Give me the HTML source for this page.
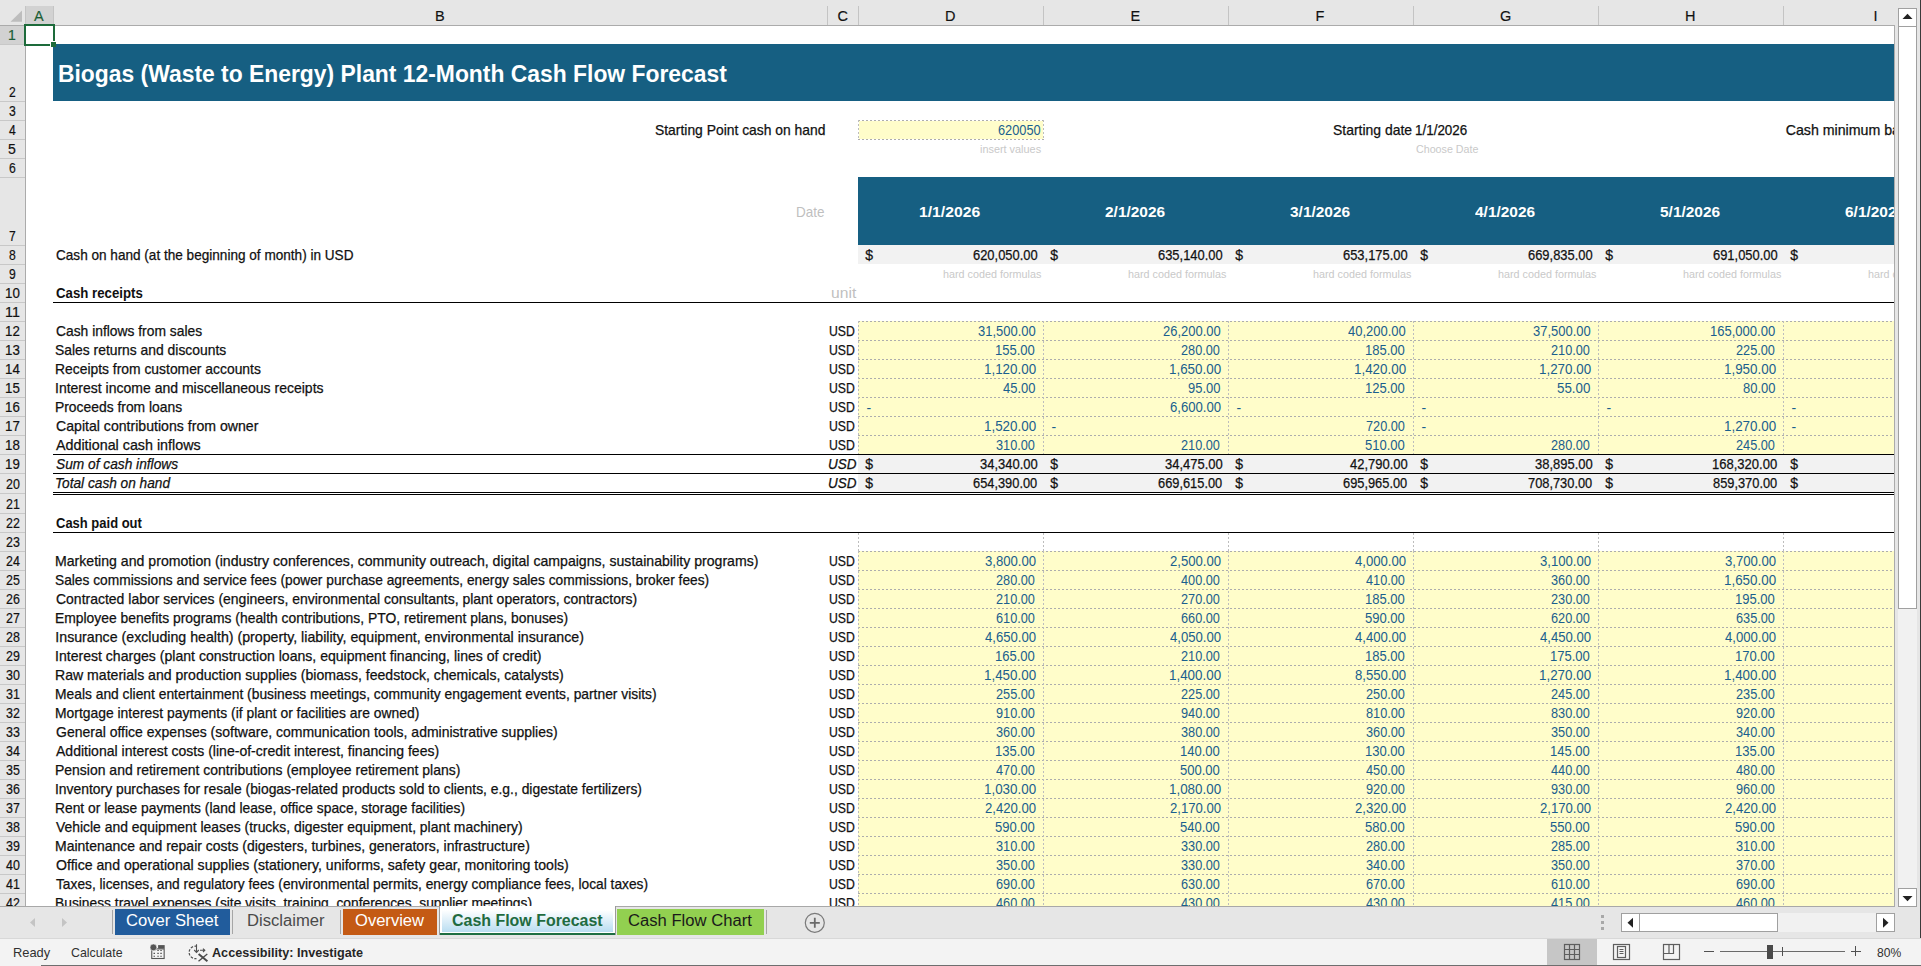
<!DOCTYPE html><html><head><meta charset="utf-8"><style>
*{margin:0;padding:0;box-sizing:content-box}
html,body{width:1921px;height:966px;overflow:hidden;background:#fff;font-family:"Liberation Sans", sans-serif}
.r{position:absolute}
.t{position:absolute;white-space:nowrap;font-family:"Liberation Sans", sans-serif}
#grid{position:absolute;left:26px;top:26px;width:1868px;height:880px;overflow:hidden}
#gin{position:absolute;left:-26px;top:-26px;width:1921px;height:966px}
#rh{position:absolute;left:0;top:26px;width:25px;height:880px;overflow:hidden}
#rhin{position:absolute;left:0;top:-26px;width:25px;height:966px}
.dh{position:absolute;height:1px;background:repeating-linear-gradient(90deg,#ADADAD 0 2px,transparent 2px 4px)}
.dv{position:absolute;width:1px;background:repeating-linear-gradient(180deg,#BDBDBD 0 2px,transparent 2px 4px)}
</style></head><body><div class="r" style="left:0px;top:0px;width:1921px;height:25px;background:#E6E6E6;"></div><div class="r" style="left:25px;top:6px;width:28px;height:19px;background:#D2D2D2;"></div><div class="r" style="left:25px;top:6px;width:1px;height:19px;background:#C4C4C4;"></div><div class="r" style="left:53px;top:6px;width:1px;height:19px;background:#C4C4C4;"></div><div class="r" style="left:827px;top:6px;width:1px;height:19px;background:#C4C4C4;"></div><div class="r" style="left:858px;top:6px;width:1px;height:19px;background:#C4C4C4;"></div><div class="r" style="left:1043px;top:6px;width:1px;height:19px;background:#C4C4C4;"></div><div class="r" style="left:1228px;top:6px;width:1px;height:19px;background:#C4C4C4;"></div><div class="r" style="left:1413px;top:6px;width:1px;height:19px;background:#C4C4C4;"></div><div class="r" style="left:1598px;top:6px;width:1px;height:19px;background:#C4C4C4;"></div><div class="r" style="left:1783px;top:6px;width:1px;height:19px;background:#C4C4C4;"></div><div class="r" style="left:0px;top:25px;width:1895px;height:1px;background:#ABABAB;"></div><svg class="r" style="left:0;top:0" width="25" height="25"><polygon points="10.5,21.7 22,10.4 22,21.7" fill="#BDBDBD"/></svg><div class="r" style="left:0px;top:26px;width:25px;height:880px;background:#E6E6E6;"></div><div class="r" style="left:0px;top:26px;width:25px;height:18px;background:#D2D2D2;"></div><div class="r" style="left:25px;top:25px;width:1px;height:881px;background:#ABABAB;"></div><div class="r" style="left:0px;top:44px;width:25px;height:1px;background:#C8C8C8;"></div><div class="r" style="left:0px;top:101px;width:25px;height:1px;background:#C8C8C8;"></div><div class="r" style="left:0px;top:120px;width:25px;height:1px;background:#C8C8C8;"></div><div class="r" style="left:0px;top:139px;width:25px;height:1px;background:#C8C8C8;"></div><div class="r" style="left:0px;top:158px;width:25px;height:1px;background:#C8C8C8;"></div><div class="r" style="left:0px;top:177px;width:25px;height:1px;background:#C8C8C8;"></div><div class="r" style="left:0px;top:245px;width:25px;height:1px;background:#C8C8C8;"></div><div class="r" style="left:0px;top:264px;width:25px;height:1px;background:#C8C8C8;"></div><div class="r" style="left:0px;top:283px;width:25px;height:1px;background:#C8C8C8;"></div><div class="r" style="left:0px;top:302px;width:25px;height:1px;background:#C8C8C8;"></div><div class="r" style="left:0px;top:321px;width:25px;height:1px;background:#C8C8C8;"></div><div class="r" style="left:0px;top:340px;width:25px;height:1px;background:#C8C8C8;"></div><div class="r" style="left:0px;top:359px;width:25px;height:1px;background:#C8C8C8;"></div><div class="r" style="left:0px;top:378px;width:25px;height:1px;background:#C8C8C8;"></div><div class="r" style="left:0px;top:397px;width:25px;height:1px;background:#C8C8C8;"></div><div class="r" style="left:0px;top:416px;width:25px;height:1px;background:#C8C8C8;"></div><div class="r" style="left:0px;top:435px;width:25px;height:1px;background:#C8C8C8;"></div><div class="r" style="left:0px;top:454px;width:25px;height:1px;background:#C8C8C8;"></div><div class="r" style="left:0px;top:473px;width:25px;height:1px;background:#C8C8C8;"></div><div class="r" style="left:0px;top:493px;width:25px;height:1px;background:#C8C8C8;"></div><div class="r" style="left:0px;top:513px;width:25px;height:1px;background:#C8C8C8;"></div><div class="r" style="left:0px;top:532px;width:25px;height:1px;background:#C8C8C8;"></div><div class="r" style="left:0px;top:551px;width:25px;height:1px;background:#C8C8C8;"></div><div class="r" style="left:0px;top:570px;width:25px;height:1px;background:#C8C8C8;"></div><div class="r" style="left:0px;top:589px;width:25px;height:1px;background:#C8C8C8;"></div><div class="r" style="left:0px;top:608px;width:25px;height:1px;background:#C8C8C8;"></div><div class="r" style="left:0px;top:627px;width:25px;height:1px;background:#C8C8C8;"></div><div class="r" style="left:0px;top:646px;width:25px;height:1px;background:#C8C8C8;"></div><div class="r" style="left:0px;top:665px;width:25px;height:1px;background:#C8C8C8;"></div><div class="r" style="left:0px;top:684px;width:25px;height:1px;background:#C8C8C8;"></div><div class="r" style="left:0px;top:703px;width:25px;height:1px;background:#C8C8C8;"></div><div class="r" style="left:0px;top:722px;width:25px;height:1px;background:#C8C8C8;"></div><div class="r" style="left:0px;top:741px;width:25px;height:1px;background:#C8C8C8;"></div><div class="r" style="left:0px;top:760px;width:25px;height:1px;background:#C8C8C8;"></div><div class="r" style="left:0px;top:779px;width:25px;height:1px;background:#C8C8C8;"></div><div class="r" style="left:0px;top:798px;width:25px;height:1px;background:#C8C8C8;"></div><div class="r" style="left:0px;top:817px;width:25px;height:1px;background:#C8C8C8;"></div><div class="r" style="left:0px;top:836px;width:25px;height:1px;background:#C8C8C8;"></div><div class="r" style="left:0px;top:855px;width:25px;height:1px;background:#C8C8C8;"></div><div class="r" style="left:0px;top:874px;width:25px;height:1px;background:#C8C8C8;"></div><div class="r" style="left:0px;top:893px;width:25px;height:1px;background:#C8C8C8;"></div><div class="r" style="left:1894px;top:25px;width:1px;height:881px;background:#ABABAB;"></div><div class="r" style="left:1895px;top:0px;width:26px;height:938px;background:#E6E6E6;"></div><div class="r" style="left:1898px;top:27px;width:19px;height:861px;background:#F1F1F1;"></div><div class="r" style="left:1898px;top:8px;width:17px;height:17px;background:#fff;border:1px solid #A0A0A0;"></div><svg class="r" style="left:1898px;top:8px" width="19" height="19"><polygon points="4.5,11 14.5,11 9.5,5.8" fill="#222"/></svg><div class="r" style="left:1898px;top:26px;width:17px;height:581px;background:#fff;border:1px solid #A0A0A0;"></div><div class="r" style="left:1898px;top:888px;width:17px;height:17px;background:#fff;border:1px solid #A0A0A0;"></div><svg class="r" style="left:1898px;top:888px" width="19" height="19"><polygon points="4.5,8 14.5,8 9.5,13.2" fill="#222"/></svg><div class="r" style="left:1920px;top:0px;width:1px;height:938px;background:#3a3a3a;"></div><div class="r" style="left:0px;top:906px;width:1895px;height:32px;background:#E6E6E6;"></div><div class="r" style="left:0px;top:906px;width:1895px;height:1px;background:#A8A8A8;"></div><svg class="r" style="left:0;top:906px" width="100" height="32"><polygon points="30,16.5 35,12 35,21" fill="#C4C4C4"/><polygon points="62,12 62,21 67,16.5" fill="#C4C4C4"/></svg><div class="r" style="left:112px;top:910px;width:1px;height:24px;background:#A6A6A6;"></div><div class="r" style="left:115px;top:909px;width:115px;height:26px;background:#215C9C;"></div><div class="r" style="left:232px;top:910px;width:1px;height:24px;background:#A6A6A6;"></div><div class="r" style="left:340px;top:910px;width:1px;height:24px;background:#A6A6A6;"></div><div class="r" style="left:343px;top:909px;width:94px;height:26px;background:#C45A14;"></div><div class="r" style="left:439px;top:906px;width:1px;height:29px;background:#9A9A9A;"></div><div class="r" style="left:615px;top:906px;width:1px;height:29px;background:#9A9A9A;"></div><div class="r" style="left:440px;top:906px;width:175px;height:27px;background:#FFFFFF;"></div><div class="r" style="left:442px;top:910px;width:171px;height:22px;background:linear-gradient(#FFFFFF,#B9DDF1);"></div><div class="r" style="left:440px;top:933px;width:175px;height:2px;background:#1E6E42;"></div><div class="r" style="left:617px;top:909px;width:147px;height:26px;background:#92D050;"></div><div class="r" style="left:766px;top:910px;width:1px;height:24px;background:#A6A6A6;"></div><svg class="r" style="left:800px;top:908px" width="30" height="30"><circle cx="14.8" cy="14.8" r="9.5" fill="none" stroke="#7A7A7A" stroke-width="1.2"/><path d="M14.8 9.8V19.8M9.8 14.8H19.8" stroke="#6A6A6A" stroke-width="1.8"/></svg><div class="r" style="left:1601px;top:915px;width:3px;height:3px;background:#A8A8A8"></div><div class="r" style="left:1601px;top:921px;width:3px;height:3px;background:#A8A8A8"></div><div class="r" style="left:1601px;top:927px;width:3px;height:3px;background:#A8A8A8"></div><div class="r" style="left:1621px;top:913px;width:274px;height:19px;background:#F1F1F1;"></div><div class="r" style="left:1621px;top:913px;width:17px;height:17px;background:#fff;border:1px solid #A0A0A0;"></div><svg class="r" style="left:1621px;top:913px" width="19" height="19"><polygon points="6.5,9.75 12,4.8 12,14.7" fill="#222"/></svg><div class="r" style="left:1639px;top:913px;width:137px;height:17px;background:#fff;border:1px solid #A0A0A0;"></div><div class="r" style="left:1876px;top:913px;width:17px;height:17px;background:#fff;border:1px solid #A0A0A0;"></div><svg class="r" style="left:1876px;top:913px" width="19" height="19"><polygon points="7,4.8 7,14.7 12.5,9.75" fill="#222"/></svg><div class="r" style="left:0px;top:938px;width:1921px;height:28px;background:#F3F3F3;"></div><div class="r" style="left:0px;top:938px;width:1921px;height:1px;background:#D8D8D8;"></div><div class="r" style="left:41px;top:965px;width:1880px;height:1px;background:#6E6E6E;"></div><svg class="r" style="left:148px;top:942px" width="20" height="20"><rect x="3.75" y="6.9" width="12.4" height="9.6" fill="none" stroke="#555" stroke-width="1.1"/><rect x="10.1" y="3.1" width="6.6" height="3.5" fill="#555"/><circle cx="5.4" cy="5.4" r="3.4" fill="#555" stroke="#F3F3F3" stroke-width="0.6"/><path d="M9.3 8.5h1.5M12.3 8.5h1.5M5.5 11.4h1.5M9.3 11.4h1.5M12.3 11.4h1.5M5.5 14.3h1.5M9.3 14.3h1.5M12.3 14.3h1.5" stroke="#555" stroke-width="1.1"/></svg><svg class="r" style="left:187px;top:941px" width="24" height="24"><path d="M10 5.36A6.25 6.25 0 1 0 9.5 17.55" fill="none" stroke="#505050" stroke-width="1.2" stroke-dasharray="2.6 1.4"/><path d="M9.5 3.25V11.4M7.2 9l2.3 2.4 2.3-2.4" fill="none" stroke="#505050" stroke-width="1.1"/><path d="M13 9.3h4.6M16 7.6l1.8 1.7-1.8 1.7" fill="none" stroke="#505050" stroke-width="1.1"/><path d="M11.6 12.9l8.8 7.4" stroke="#4A4A4A" stroke-width="2"/><path d="M20.3 12.9l-8.8 7.4" stroke="#4A4A4A" stroke-width="1.3"/></svg><div class="r" style="left:1547px;top:939px;width:50px;height:26px;background:#C6C6C6;"></div><svg class="r" style="left:1560px;top:940px" width="130" height="24"><rect x="4.5" y="4.5" width="15" height="15" fill="none" stroke="#5E5E5E" stroke-width="1.2"/><path d="M9.5 4.5v15M14.5 4.5v15M4.5 9.5h15M4.5 14.5h15" stroke="#5E5E5E" stroke-width="1.2"/><rect x="53.5" y="4.5" width="16" height="15" fill="none" stroke="#5E5E5E" stroke-width="1.2"/><rect x="57.5" y="6.5" width="8" height="11" fill="none" stroke="#5E5E5E" stroke-width="1.2"/><path d="M59.5 9.5h4M59.5 11.5h4M59.5 13.5h4" stroke="#5E5E5E" stroke-width="1"/><rect x="103.5" y="4.5" width="16" height="15" fill="none" stroke="#5E5E5E" stroke-width="1.2"/><path d="M103.5 13.5h10v-9M109 4.5v9" fill="none" stroke="#5E5E5E" stroke-width="1.2"/></svg><div class="r" style="left:1704px;top:951px;width:10px;height:1px;background:#505050;"></div><div class="r" style="left:1720px;top:951px;width:125px;height:1px;background:#6A6A6A;"></div><div class="r" style="left:1767px;top:945px;width:6px;height:14px;background:#4A4A4A;"></div><div class="r" style="left:1782px;top:947px;width:1px;height:9px;background:#505050;"></div><div class="r" style="left:1851px;top:951px;width:10px;height:1px;background:#505050;"></div><div class="r" style="left:1855px;top:946px;width:1px;height:10px;background:#505050;"></div><div class="t" style="left:34.00px;top:8.73px;font-size:14.5px;line-height:14.5px;color:#1B5E35;-webkit-text-stroke:0.15px #1B5E35;">A</div><div class="t" style="left:435.00px;top:8.73px;font-size:14.5px;line-height:14.5px;color:#111111;-webkit-text-stroke:0.15px #111111;">B</div><div class="t" style="left:837.50px;top:8.73px;font-size:14.5px;line-height:14.5px;color:#111111;-webkit-text-stroke:0.15px #111111;">C</div><div class="t" style="left:945.00px;top:8.73px;font-size:14.5px;line-height:14.5px;color:#111111;-webkit-text-stroke:0.15px #111111;">D</div><div class="t" style="left:1130.50px;top:8.73px;font-size:14.5px;line-height:14.5px;color:#111111;-webkit-text-stroke:0.15px #111111;">E</div><div class="t" style="left:1315.50px;top:8.73px;font-size:14.5px;line-height:14.5px;color:#111111;-webkit-text-stroke:0.15px #111111;">F</div><div class="t" style="left:1500.00px;top:8.73px;font-size:14.5px;line-height:14.5px;color:#111111;-webkit-text-stroke:0.15px #111111;">G</div><div class="t" style="left:1685.00px;top:8.73px;font-size:14.5px;line-height:14.5px;color:#111111;-webkit-text-stroke:0.15px #111111;">H</div><div class="t" style="left:1873.50px;top:8.73px;font-size:14.5px;line-height:14.5px;color:#111111;-webkit-text-stroke:0.15px #111111;">I</div><div class="t" style="left:125.61px;top:913.09px;font-size:15.6px;line-height:15.6px;color:#FFFFFF;transform:scaleX(1.0656);transform-origin:0 50%;">Cover Sheet</div><div class="t" style="left:246.62px;top:913.09px;font-size:15.6px;line-height:15.6px;color:#4A4A4A;transform:scaleX(1.0644);transform-origin:0 50%;">Disclaimer</div><div class="t" style="left:354.98px;top:913.09px;font-size:15.6px;line-height:15.6px;color:#FFFFFF;transform:scaleX(1.0621);transform-origin:0 50%;">Overview</div><div class="t" style="left:451.64px;top:913.09px;font-size:15.6px;line-height:15.6px;font-weight:700;color:#1F6B40;transform:scaleX(1.0225);transform-origin:0 50%;">Cash Flow Forecast</div><div class="t" style="left:628.01px;top:913.09px;font-size:15.6px;line-height:15.6px;color:#1A1A1A;transform:scaleX(1.0664);transform-origin:0 50%;">Cash Flow Chart</div><div class="t" style="left:13.19px;top:946.76px;font-size:12.8px;line-height:12.8px;color:#303030;transform:scaleX(1.0056);transform-origin:0 50%;">Ready</div><div class="t" style="left:71.41px;top:946.76px;font-size:12.8px;line-height:12.8px;color:#303030;transform:scaleX(0.9656);transform-origin:0 50%;">Calculate</div><div class="t" style="left:211.70px;top:946.76px;font-size:12.8px;line-height:12.8px;font-weight:700;color:#262626;transform:scaleX(0.9869);transform-origin:0 50%;">Accessibility: Investigate</div><div class="t" style="left:1876.72px;top:946.76px;font-size:12.8px;line-height:12.8px;color:#303030;transform:scaleX(0.9449);transform-origin:0 50%;">80%</div><div id="rh"><div id="rhin"><div class="t" style="left:8.14px;top:28.13px;font-size:14.5px;line-height:14.5px;color:#1B5E35;-webkit-text-stroke:0.2px #1B5E35;transform:scaleX(0.9688);transform-origin:0 50%;">1</div><div class="t" style="left:9.15px;top:85.13px;font-size:14.5px;line-height:14.5px;color:#111111;-webkit-text-stroke:0.2px #111111;transform:scaleX(0.8378);transform-origin:0 50%;">2</div><div class="t" style="left:9.15px;top:104.13px;font-size:14.5px;line-height:14.5px;color:#111111;-webkit-text-stroke:0.2px #111111;transform:scaleX(0.8378);transform-origin:0 50%;">3</div><div class="t" style="left:9.15px;top:123.13px;font-size:14.5px;line-height:14.5px;color:#111111;-webkit-text-stroke:0.2px #111111;transform:scaleX(0.8378);transform-origin:0 50%;">4</div><div class="t" style="left:8.14px;top:142.13px;font-size:14.5px;line-height:14.5px;color:#111111;-webkit-text-stroke:0.2px #111111;transform:scaleX(0.9688);transform-origin:0 50%;">5</div><div class="t" style="left:9.15px;top:161.13px;font-size:14.5px;line-height:14.5px;color:#111111;-webkit-text-stroke:0.2px #111111;transform:scaleX(0.8378);transform-origin:0 50%;">6</div><div class="t" style="left:9.15px;top:229.13px;font-size:14.5px;line-height:14.5px;color:#111111;-webkit-text-stroke:0.2px #111111;transform:scaleX(0.8378);transform-origin:0 50%;">7</div><div class="t" style="left:9.15px;top:248.13px;font-size:14.5px;line-height:14.5px;color:#111111;-webkit-text-stroke:0.2px #111111;transform:scaleX(0.8378);transform-origin:0 50%;">8</div><div class="t" style="left:9.15px;top:267.13px;font-size:14.5px;line-height:14.5px;color:#111111;-webkit-text-stroke:0.2px #111111;transform:scaleX(0.8378);transform-origin:0 50%;">9</div><div class="t" style="left:4.71px;top:286.13px;font-size:14.5px;line-height:14.5px;color:#111111;-webkit-text-stroke:0.2px #111111;transform:scaleX(0.9167);transform-origin:0 50%;">10</div><div class="t" style="left:4.62px;top:305.13px;font-size:14.5px;line-height:14.5px;color:#111111;-webkit-text-stroke:0.2px #111111;transform:scaleX(0.9851);transform-origin:0 50%;">11</div><div class="t" style="left:4.71px;top:324.13px;font-size:14.5px;line-height:14.5px;color:#111111;-webkit-text-stroke:0.2px #111111;transform:scaleX(0.9167);transform-origin:0 50%;">12</div><div class="t" style="left:4.71px;top:343.13px;font-size:14.5px;line-height:14.5px;color:#111111;-webkit-text-stroke:0.2px #111111;transform:scaleX(0.9167);transform-origin:0 50%;">13</div><div class="t" style="left:4.71px;top:362.13px;font-size:14.5px;line-height:14.5px;color:#111111;-webkit-text-stroke:0.2px #111111;transform:scaleX(0.9167);transform-origin:0 50%;">14</div><div class="t" style="left:4.71px;top:381.13px;font-size:14.5px;line-height:14.5px;color:#111111;-webkit-text-stroke:0.2px #111111;transform:scaleX(0.9167);transform-origin:0 50%;">15</div><div class="t" style="left:4.71px;top:400.13px;font-size:14.5px;line-height:14.5px;color:#111111;-webkit-text-stroke:0.2px #111111;transform:scaleX(0.9167);transform-origin:0 50%;">16</div><div class="t" style="left:4.71px;top:419.13px;font-size:14.5px;line-height:14.5px;color:#111111;-webkit-text-stroke:0.2px #111111;transform:scaleX(0.9167);transform-origin:0 50%;">17</div><div class="t" style="left:4.71px;top:438.13px;font-size:14.5px;line-height:14.5px;color:#111111;-webkit-text-stroke:0.2px #111111;transform:scaleX(0.9167);transform-origin:0 50%;">18</div><div class="t" style="left:4.71px;top:457.13px;font-size:14.5px;line-height:14.5px;color:#111111;-webkit-text-stroke:0.2px #111111;transform:scaleX(0.9167);transform-origin:0 50%;">19</div><div class="t" style="left:5.64px;top:477.13px;font-size:14.5px;line-height:14.5px;color:#111111;-webkit-text-stroke:0.2px #111111;transform:scaleX(0.8571);transform-origin:0 50%;">20</div><div class="t" style="left:5.64px;top:497.13px;font-size:14.5px;line-height:14.5px;color:#111111;-webkit-text-stroke:0.2px #111111;transform:scaleX(0.8571);transform-origin:0 50%;">21</div><div class="t" style="left:5.64px;top:516.13px;font-size:14.5px;line-height:14.5px;color:#111111;-webkit-text-stroke:0.2px #111111;transform:scaleX(0.8571);transform-origin:0 50%;">22</div><div class="t" style="left:5.64px;top:535.13px;font-size:14.5px;line-height:14.5px;color:#111111;-webkit-text-stroke:0.2px #111111;transform:scaleX(0.8571);transform-origin:0 50%;">23</div><div class="t" style="left:5.64px;top:554.13px;font-size:14.5px;line-height:14.5px;color:#111111;-webkit-text-stroke:0.2px #111111;transform:scaleX(0.8571);transform-origin:0 50%;">24</div><div class="t" style="left:5.64px;top:573.13px;font-size:14.5px;line-height:14.5px;color:#111111;-webkit-text-stroke:0.2px #111111;transform:scaleX(0.8571);transform-origin:0 50%;">25</div><div class="t" style="left:5.64px;top:592.13px;font-size:14.5px;line-height:14.5px;color:#111111;-webkit-text-stroke:0.2px #111111;transform:scaleX(0.8571);transform-origin:0 50%;">26</div><div class="t" style="left:5.64px;top:611.13px;font-size:14.5px;line-height:14.5px;color:#111111;-webkit-text-stroke:0.2px #111111;transform:scaleX(0.8571);transform-origin:0 50%;">27</div><div class="t" style="left:5.64px;top:630.13px;font-size:14.5px;line-height:14.5px;color:#111111;-webkit-text-stroke:0.2px #111111;transform:scaleX(0.8571);transform-origin:0 50%;">28</div><div class="t" style="left:5.64px;top:649.13px;font-size:14.5px;line-height:14.5px;color:#111111;-webkit-text-stroke:0.2px #111111;transform:scaleX(0.8571);transform-origin:0 50%;">29</div><div class="t" style="left:5.64px;top:668.13px;font-size:14.5px;line-height:14.5px;color:#111111;-webkit-text-stroke:0.2px #111111;transform:scaleX(0.8571);transform-origin:0 50%;">30</div><div class="t" style="left:5.64px;top:687.13px;font-size:14.5px;line-height:14.5px;color:#111111;-webkit-text-stroke:0.2px #111111;transform:scaleX(0.8571);transform-origin:0 50%;">31</div><div class="t" style="left:5.64px;top:706.13px;font-size:14.5px;line-height:14.5px;color:#111111;-webkit-text-stroke:0.2px #111111;transform:scaleX(0.8571);transform-origin:0 50%;">32</div><div class="t" style="left:5.64px;top:725.13px;font-size:14.5px;line-height:14.5px;color:#111111;-webkit-text-stroke:0.2px #111111;transform:scaleX(0.8571);transform-origin:0 50%;">33</div><div class="t" style="left:5.64px;top:744.13px;font-size:14.5px;line-height:14.5px;color:#111111;-webkit-text-stroke:0.2px #111111;transform:scaleX(0.8571);transform-origin:0 50%;">34</div><div class="t" style="left:5.64px;top:763.13px;font-size:14.5px;line-height:14.5px;color:#111111;-webkit-text-stroke:0.2px #111111;transform:scaleX(0.8571);transform-origin:0 50%;">35</div><div class="t" style="left:5.64px;top:782.13px;font-size:14.5px;line-height:14.5px;color:#111111;-webkit-text-stroke:0.2px #111111;transform:scaleX(0.8571);transform-origin:0 50%;">36</div><div class="t" style="left:5.64px;top:801.13px;font-size:14.5px;line-height:14.5px;color:#111111;-webkit-text-stroke:0.2px #111111;transform:scaleX(0.8571);transform-origin:0 50%;">37</div><div class="t" style="left:5.64px;top:820.13px;font-size:14.5px;line-height:14.5px;color:#111111;-webkit-text-stroke:0.2px #111111;transform:scaleX(0.8571);transform-origin:0 50%;">38</div><div class="t" style="left:5.64px;top:839.13px;font-size:14.5px;line-height:14.5px;color:#111111;-webkit-text-stroke:0.2px #111111;transform:scaleX(0.8571);transform-origin:0 50%;">39</div><div class="t" style="left:5.64px;top:858.13px;font-size:14.5px;line-height:14.5px;color:#111111;-webkit-text-stroke:0.2px #111111;transform:scaleX(0.8571);transform-origin:0 50%;">40</div><div class="t" style="left:5.64px;top:877.13px;font-size:14.5px;line-height:14.5px;color:#111111;-webkit-text-stroke:0.2px #111111;transform:scaleX(0.8571);transform-origin:0 50%;">41</div><div class="t" style="left:5.64px;top:896.13px;font-size:14.5px;line-height:14.5px;color:#111111;-webkit-text-stroke:0.2px #111111;transform:scaleX(0.8571);transform-origin:0 50%;">42</div></div></div><div id="grid"><div id="gin"><div class="r" style="left:53px;top:44px;width:1841px;height:57px;background:#165F82;"></div><div class="r" style="left:859px;top:121px;width:184px;height:18px;background:#FFFDCA;"></div><div class="dh" style="left:858px;top:120px;width:186px"></div><div class="dh" style="left:858px;top:139px;width:186px"></div><div class="dv" style="left:858px;top:120px;height:20px"></div><div class="dv" style="left:1043px;top:120px;height:20px"></div><div class="r" style="left:858px;top:177px;width:1036px;height:68px;background:#165F82;"></div><div class="r" style="left:858px;top:245px;width:1036px;height:19px;background:#F2F2F2;"></div><div class="r" style="left:53px;top:302px;width:1841px;height:1px;background:#000;"></div><div class="r" style="left:858px;top:321px;width:1036px;height:133px;background:#FFFDCA;"></div><div class="dh" style="left:858px;top:321px;width:1036px"></div><div class="dh" style="left:858px;top:340px;width:1036px"></div><div class="dh" style="left:858px;top:359px;width:1036px"></div><div class="dh" style="left:858px;top:378px;width:1036px"></div><div class="dh" style="left:858px;top:397px;width:1036px"></div><div class="dh" style="left:858px;top:416px;width:1036px"></div><div class="dh" style="left:858px;top:435px;width:1036px"></div><div class="dv" style="left:858px;top:321px;height:133px"></div><div class="dv" style="left:1043px;top:321px;height:133px"></div><div class="dv" style="left:1228px;top:321px;height:133px"></div><div class="dv" style="left:1413px;top:321px;height:133px"></div><div class="dv" style="left:1598px;top:321px;height:133px"></div><div class="dv" style="left:1783px;top:321px;height:133px"></div><div class="r" style="left:53px;top:454px;width:1841px;height:1px;background:#000;"></div><div class="r" style="left:858px;top:455px;width:1036px;height:18px;background:#F2F2F2;"></div><div class="r" style="left:53px;top:473px;width:1841px;height:1px;background:#000;"></div><div class="r" style="left:858px;top:474px;width:1036px;height:18px;background:#F2F2F2;"></div><div class="r" style="left:53px;top:492px;width:1841px;height:1px;background:#000;"></div><div class="r" style="left:53px;top:494px;width:1841px;height:1px;background:#000;"></div><div class="r" style="left:53px;top:532px;width:1841px;height:1px;background:#000;"></div><div class="dv" style="left:858px;top:533px;height:18px"></div><div class="dv" style="left:1043px;top:533px;height:18px"></div><div class="dv" style="left:1228px;top:533px;height:18px"></div><div class="dv" style="left:1413px;top:533px;height:18px"></div><div class="dv" style="left:1598px;top:533px;height:18px"></div><div class="dv" style="left:1783px;top:533px;height:18px"></div><div class="r" style="left:858px;top:551px;width:1036px;height:380px;background:#FFFDCA;"></div><div class="dh" style="left:858px;top:551px;width:1036px"></div><div class="dh" style="left:858px;top:570px;width:1036px"></div><div class="dh" style="left:858px;top:589px;width:1036px"></div><div class="dh" style="left:858px;top:608px;width:1036px"></div><div class="dh" style="left:858px;top:627px;width:1036px"></div><div class="dh" style="left:858px;top:646px;width:1036px"></div><div class="dh" style="left:858px;top:665px;width:1036px"></div><div class="dh" style="left:858px;top:684px;width:1036px"></div><div class="dh" style="left:858px;top:703px;width:1036px"></div><div class="dh" style="left:858px;top:722px;width:1036px"></div><div class="dh" style="left:858px;top:741px;width:1036px"></div><div class="dh" style="left:858px;top:760px;width:1036px"></div><div class="dh" style="left:858px;top:779px;width:1036px"></div><div class="dh" style="left:858px;top:798px;width:1036px"></div><div class="dh" style="left:858px;top:817px;width:1036px"></div><div class="dh" style="left:858px;top:836px;width:1036px"></div><div class="dh" style="left:858px;top:855px;width:1036px"></div><div class="dh" style="left:858px;top:874px;width:1036px"></div><div class="dh" style="left:858px;top:893px;width:1036px"></div><div class="dh" style="left:858px;top:912px;width:1036px"></div><div class="dv" style="left:858px;top:551px;height:380px"></div><div class="dv" style="left:1043px;top:551px;height:380px"></div><div class="dv" style="left:1228px;top:551px;height:380px"></div><div class="dv" style="left:1413px;top:551px;height:380px"></div><div class="dv" style="left:1598px;top:551px;height:380px"></div><div class="dv" style="left:1783px;top:551px;height:380px"></div><div class="t" style="left:58.23px;top:63.11px;font-size:23.5px;line-height:23.5px;font-weight:700;color:#FFFFFF;transform:scaleX(0.9732);transform-origin:0 50%;">Biogas (Waste to Energy) Plant 12-Month Cash Flow Forecast</div><div class="t" style="left:654.73px;top:122.68px;font-size:14.2px;line-height:14.2px;color:#111111;-webkit-text-stroke:0.25px #111111;transform:scaleX(0.9780);transform-origin:0 50%;">Starting Point cash on hand</div><div class="t" style="left:998.43px;top:122.98px;font-size:14.2px;line-height:14.2px;color:#1A5F8E;transform:scaleX(0.9009);transform-origin:0 50%;">620050</div><div class="t" style="left:980.19px;top:144.11px;font-size:10.5px;line-height:10.5px;color:#C9C9C9;transform:scaleX(1.0360);transform-origin:0 50%;">insert values</div><div class="t" style="left:1332.72px;top:122.68px;font-size:14.2px;line-height:14.2px;color:#111111;-webkit-text-stroke:0.25px #111111;transform:scaleX(0.9821);transform-origin:0 50%;">Starting date</div><div class="t" style="left:1415.27px;top:122.68px;font-size:14.2px;line-height:14.2px;color:#111111;-webkit-text-stroke:0.25px #111111;transform:scaleX(0.9457);transform-origin:0 50%;">1/1/2026</div><div class="t" style="left:1416.19px;top:144.11px;font-size:10.5px;line-height:10.5px;color:#C9C9C9;transform:scaleX(1.0182);transform-origin:0 50%;">Choose Date</div><div class="t" style="left:1785.70px;top:122.68px;font-size:14.2px;line-height:14.2px;color:#111111;-webkit-text-stroke:0.25px #111111;">Cash minimum balance</div><div class="t" style="left:796.26px;top:205.38px;font-size:14.2px;line-height:14.2px;color:#BFBFBF;transform:scaleX(0.9507);transform-origin:0 50%;">Date</div><div class="t" style="left:919.37px;top:204.26px;font-size:15.4px;line-height:15.4px;font-weight:700;color:#FFFFFF;transform:scaleX(1.0205);transform-origin:0 50%;">1/1/2026</div><div class="t" style="left:1105.40px;top:204.26px;font-size:15.4px;line-height:15.4px;font-weight:700;color:#FFFFFF;transform:scaleX(1.0034);transform-origin:0 50%;">2/1/2026</div><div class="t" style="left:1290.40px;top:204.26px;font-size:15.4px;line-height:15.4px;font-weight:700;color:#FFFFFF;transform:scaleX(1.0034);transform-origin:0 50%;">3/1/2026</div><div class="t" style="left:1475.40px;top:204.26px;font-size:15.4px;line-height:15.4px;font-weight:700;color:#FFFFFF;transform:scaleX(1.0034);transform-origin:0 50%;">4/1/2026</div><div class="t" style="left:1660.40px;top:204.26px;font-size:15.4px;line-height:15.4px;font-weight:700;color:#FFFFFF;transform:scaleX(1.0034);transform-origin:0 50%;">5/1/2026</div><div class="t" style="left:1845.40px;top:204.26px;font-size:15.4px;line-height:15.4px;font-weight:700;color:#FFFFFF;transform:scaleX(1.0034);transform-origin:0 50%;">6/1/2026</div><div class="t" style="left:55.91px;top:247.88px;font-size:14.2px;line-height:14.2px;color:#111111;-webkit-text-stroke:0.25px #111111;transform:scaleX(0.9573);transform-origin:0 50%;">Cash on hand (at the beginning of month) in USD</div><div class="t" style="left:865.20px;top:248.15px;font-size:14.0px;line-height:14.0px;color:#111111;-webkit-text-stroke:0.25px #111111;">$</div><div class="t" style="left:972.72px;top:248.15px;font-size:14.0px;line-height:14.0px;color:#111111;-webkit-text-stroke:0.25px #111111;transform:scaleX(0.9222);transform-origin:0 50%;">620,050.00</div><div class="t" style="left:1050.20px;top:248.15px;font-size:14.0px;line-height:14.0px;color:#111111;-webkit-text-stroke:0.25px #111111;">$</div><div class="t" style="left:1157.72px;top:248.15px;font-size:14.0px;line-height:14.0px;color:#111111;-webkit-text-stroke:0.25px #111111;transform:scaleX(0.9222);transform-origin:0 50%;">635,140.00</div><div class="t" style="left:1235.20px;top:248.15px;font-size:14.0px;line-height:14.0px;color:#111111;-webkit-text-stroke:0.25px #111111;">$</div><div class="t" style="left:1342.72px;top:248.15px;font-size:14.0px;line-height:14.0px;color:#111111;-webkit-text-stroke:0.25px #111111;transform:scaleX(0.9222);transform-origin:0 50%;">653,175.00</div><div class="t" style="left:1420.20px;top:248.15px;font-size:14.0px;line-height:14.0px;color:#111111;-webkit-text-stroke:0.25px #111111;">$</div><div class="t" style="left:1527.72px;top:248.15px;font-size:14.0px;line-height:14.0px;color:#111111;-webkit-text-stroke:0.25px #111111;transform:scaleX(0.9222);transform-origin:0 50%;">669,835.00</div><div class="t" style="left:1605.20px;top:248.15px;font-size:14.0px;line-height:14.0px;color:#111111;-webkit-text-stroke:0.25px #111111;">$</div><div class="t" style="left:1712.72px;top:248.15px;font-size:14.0px;line-height:14.0px;color:#111111;-webkit-text-stroke:0.25px #111111;transform:scaleX(0.9222);transform-origin:0 50%;">691,050.00</div><div class="t" style="left:1790.20px;top:248.15px;font-size:14.0px;line-height:14.0px;color:#111111;-webkit-text-stroke:0.25px #111111;">$</div><div class="t" style="left:942.69px;top:268.91px;font-size:10.5px;line-height:10.5px;color:#C9C9C9;transform:scaleX(1.0273);transform-origin:0 50%;">hard coded formulas</div><div class="t" style="left:1127.69px;top:268.91px;font-size:10.5px;line-height:10.5px;color:#C9C9C9;transform:scaleX(1.0273);transform-origin:0 50%;">hard coded formulas</div><div class="t" style="left:1312.69px;top:268.91px;font-size:10.5px;line-height:10.5px;color:#C9C9C9;transform:scaleX(1.0273);transform-origin:0 50%;">hard coded formulas</div><div class="t" style="left:1497.69px;top:268.91px;font-size:10.5px;line-height:10.5px;color:#C9C9C9;transform:scaleX(1.0273);transform-origin:0 50%;">hard coded formulas</div><div class="t" style="left:1682.69px;top:268.91px;font-size:10.5px;line-height:10.5px;color:#C9C9C9;transform:scaleX(1.0273);transform-origin:0 50%;">hard coded formulas</div><div class="t" style="left:1867.69px;top:268.91px;font-size:10.5px;line-height:10.5px;color:#C9C9C9;transform:scaleX(1.0273);transform-origin:0 50%;">hard coded formulas</div><div class="t" style="left:55.92px;top:285.78px;font-size:14.2px;line-height:14.2px;font-weight:700;color:#111111;transform:scaleX(0.9329);transform-origin:0 50%;">Cash receipts</div><div class="t" style="left:831.27px;top:285.98px;font-size:14.2px;line-height:14.2px;color:#BFBFBF;transform:scaleX(1.1028);transform-origin:0 50%;">unit</div><div class="t" style="left:56.31px;top:323.88px;font-size:14.2px;line-height:14.2px;color:#111111;-webkit-text-stroke:0.25px #111111;transform:scaleX(0.9752);transform-origin:0 50%;">Cash inflows from sales</div><div class="t" style="left:828.88px;top:323.88px;font-size:14.2px;line-height:14.2px;color:#111111;-webkit-text-stroke:0.25px #111111;transform:scaleX(0.8627);transform-origin:0 50%;">USD</div><div class="t" style="left:977.87px;top:324.05px;font-size:14.0px;line-height:14.0px;color:#1A5F8E;transform:scaleX(0.9259);transform-origin:0 50%;">31,500.00</div><div class="t" style="left:1162.87px;top:324.05px;font-size:14.0px;line-height:14.0px;color:#1A5F8E;transform:scaleX(0.9259);transform-origin:0 50%;">26,200.00</div><div class="t" style="left:1347.87px;top:324.05px;font-size:14.0px;line-height:14.0px;color:#1A5F8E;transform:scaleX(0.9259);transform-origin:0 50%;">40,200.00</div><div class="t" style="left:1532.87px;top:324.05px;font-size:14.0px;line-height:14.0px;color:#1A5F8E;transform:scaleX(0.9259);transform-origin:0 50%;">37,500.00</div><div class="t" style="left:1710.19px;top:324.05px;font-size:14.0px;line-height:14.0px;color:#1A5F8E;transform:scaleX(0.9298);transform-origin:0 50%;">165,000.00</div><div class="t" style="left:55.33px;top:342.88px;font-size:14.2px;line-height:14.2px;color:#111111;-webkit-text-stroke:0.25px #111111;transform:scaleX(0.9781);transform-origin:0 50%;">Sales returns and discounts</div><div class="t" style="left:828.88px;top:342.88px;font-size:14.2px;line-height:14.2px;color:#111111;-webkit-text-stroke:0.25px #111111;transform:scaleX(0.8627);transform-origin:0 50%;">USD</div><div class="t" style="left:995.24px;top:343.05px;font-size:14.0px;line-height:14.0px;color:#1A5F8E;transform:scaleX(0.9312);transform-origin:0 50%;">155.00</div><div class="t" style="left:1181.18px;top:343.05px;font-size:14.0px;line-height:14.0px;color:#1A5F8E;transform:scaleX(0.9092);transform-origin:0 50%;">280.00</div><div class="t" style="left:1365.24px;top:343.05px;font-size:14.0px;line-height:14.0px;color:#1A5F8E;transform:scaleX(0.9312);transform-origin:0 50%;">185.00</div><div class="t" style="left:1551.18px;top:343.05px;font-size:14.0px;line-height:14.0px;color:#1A5F8E;transform:scaleX(0.9092);transform-origin:0 50%;">210.00</div><div class="t" style="left:1736.18px;top:343.05px;font-size:14.0px;line-height:14.0px;color:#1A5F8E;transform:scaleX(0.9092);transform-origin:0 50%;">225.00</div><div class="t" style="left:55.33px;top:361.88px;font-size:14.2px;line-height:14.2px;color:#111111;-webkit-text-stroke:0.25px #111111;transform:scaleX(0.9779);transform-origin:0 50%;">Receipts from customer accounts</div><div class="t" style="left:828.88px;top:361.88px;font-size:14.2px;line-height:14.2px;color:#111111;-webkit-text-stroke:0.25px #111111;transform:scaleX(0.8627);transform-origin:0 50%;">USD</div><div class="t" style="left:983.66px;top:362.05px;font-size:14.0px;line-height:14.0px;color:#1A5F8E;transform:scaleX(0.9561);transform-origin:0 50%;">1,120.00</div><div class="t" style="left:1168.66px;top:362.05px;font-size:14.0px;line-height:14.0px;color:#1A5F8E;transform:scaleX(0.9561);transform-origin:0 50%;">1,650.00</div><div class="t" style="left:1353.66px;top:362.05px;font-size:14.0px;line-height:14.0px;color:#1A5F8E;transform:scaleX(0.9561);transform-origin:0 50%;">1,420.00</div><div class="t" style="left:1538.66px;top:362.05px;font-size:14.0px;line-height:14.0px;color:#1A5F8E;transform:scaleX(0.9561);transform-origin:0 50%;">1,270.00</div><div class="t" style="left:1723.66px;top:362.05px;font-size:14.0px;line-height:14.0px;color:#1A5F8E;transform:scaleX(0.9561);transform-origin:0 50%;">1,950.00</div><div class="t" style="left:55.32px;top:380.88px;font-size:14.2px;line-height:14.2px;color:#111111;-webkit-text-stroke:0.25px #111111;transform:scaleX(0.9871);transform-origin:0 50%;">Interest income and miscellaneous receipts</div><div class="t" style="left:828.88px;top:380.88px;font-size:14.2px;line-height:14.2px;color:#111111;-webkit-text-stroke:0.25px #111111;transform:scaleX(0.8627);transform-origin:0 50%;">USD</div><div class="t" style="left:1002.92px;top:381.05px;font-size:14.0px;line-height:14.0px;color:#1A5F8E;transform:scaleX(0.9244);transform-origin:0 50%;">45.00</div><div class="t" style="left:1187.92px;top:381.05px;font-size:14.0px;line-height:14.0px;color:#1A5F8E;transform:scaleX(0.9244);transform-origin:0 50%;">95.00</div><div class="t" style="left:1365.24px;top:381.05px;font-size:14.0px;line-height:14.0px;color:#1A5F8E;transform:scaleX(0.9312);transform-origin:0 50%;">125.00</div><div class="t" style="left:1556.96px;top:381.05px;font-size:14.0px;line-height:14.0px;color:#1A5F8E;transform:scaleX(0.9521);transform-origin:0 50%;">55.00</div><div class="t" style="left:1742.92px;top:381.05px;font-size:14.0px;line-height:14.0px;color:#1A5F8E;transform:scaleX(0.9244);transform-origin:0 50%;">80.00</div><div class="t" style="left:55.33px;top:399.88px;font-size:14.2px;line-height:14.2px;color:#111111;-webkit-text-stroke:0.25px #111111;transform:scaleX(0.9774);transform-origin:0 50%;">Proceeds from loans</div><div class="t" style="left:828.88px;top:399.88px;font-size:14.2px;line-height:14.2px;color:#111111;-webkit-text-stroke:0.25px #111111;transform:scaleX(0.8627);transform-origin:0 50%;">USD</div><div class="t" style="left:866.50px;top:400.65px;font-size:14.0px;line-height:14.0px;color:#1A5F8E;">-</div><div class="t" style="left:1169.62px;top:400.05px;font-size:14.0px;line-height:14.0px;color:#1A5F8E;transform:scaleX(0.9382);transform-origin:0 50%;">6,600.00</div><div class="t" style="left:1236.50px;top:400.65px;font-size:14.0px;line-height:14.0px;color:#1A5F8E;">-</div><div class="t" style="left:1421.50px;top:400.65px;font-size:14.0px;line-height:14.0px;color:#1A5F8E;">-</div><div class="t" style="left:1606.50px;top:400.65px;font-size:14.0px;line-height:14.0px;color:#1A5F8E;">-</div><div class="t" style="left:1791.50px;top:400.65px;font-size:14.0px;line-height:14.0px;color:#1A5F8E;">-</div><div class="t" style="left:56.30px;top:418.88px;font-size:14.2px;line-height:14.2px;color:#111111;-webkit-text-stroke:0.25px #111111;transform:scaleX(0.9946);transform-origin:0 50%;">Capital contributions from owner</div><div class="t" style="left:828.88px;top:418.88px;font-size:14.2px;line-height:14.2px;color:#111111;-webkit-text-stroke:0.25px #111111;transform:scaleX(0.8627);transform-origin:0 50%;">USD</div><div class="t" style="left:983.66px;top:419.05px;font-size:14.0px;line-height:14.0px;color:#1A5F8E;transform:scaleX(0.9561);transform-origin:0 50%;">1,520.00</div><div class="t" style="left:1051.50px;top:419.65px;font-size:14.0px;line-height:14.0px;color:#1A5F8E;">-</div><div class="t" style="left:1366.18px;top:419.05px;font-size:14.0px;line-height:14.0px;color:#1A5F8E;transform:scaleX(0.9092);transform-origin:0 50%;">720.00</div><div class="t" style="left:1421.50px;top:419.65px;font-size:14.0px;line-height:14.0px;color:#1A5F8E;">-</div><div class="t" style="left:1723.66px;top:419.05px;font-size:14.0px;line-height:14.0px;color:#1A5F8E;transform:scaleX(0.9561);transform-origin:0 50%;">1,270.00</div><div class="t" style="left:1791.50px;top:419.65px;font-size:14.0px;line-height:14.0px;color:#1A5F8E;">-</div><div class="t" style="left:56.30px;top:437.88px;font-size:14.2px;line-height:14.2px;color:#111111;-webkit-text-stroke:0.25px #111111;transform:scaleX(1.0077);transform-origin:0 50%;">Additional cash inflows</div><div class="t" style="left:828.88px;top:437.88px;font-size:14.2px;line-height:14.2px;color:#111111;-webkit-text-stroke:0.25px #111111;transform:scaleX(0.8627);transform-origin:0 50%;">USD</div><div class="t" style="left:996.18px;top:438.05px;font-size:14.0px;line-height:14.0px;color:#1A5F8E;transform:scaleX(0.9092);transform-origin:0 50%;">310.00</div><div class="t" style="left:1181.18px;top:438.05px;font-size:14.0px;line-height:14.0px;color:#1A5F8E;transform:scaleX(0.9092);transform-origin:0 50%;">210.00</div><div class="t" style="left:1365.24px;top:438.05px;font-size:14.0px;line-height:14.0px;color:#1A5F8E;transform:scaleX(0.9312);transform-origin:0 50%;">510.00</div><div class="t" style="left:1551.18px;top:438.05px;font-size:14.0px;line-height:14.0px;color:#1A5F8E;transform:scaleX(0.9092);transform-origin:0 50%;">280.00</div><div class="t" style="left:1736.18px;top:438.05px;font-size:14.0px;line-height:14.0px;color:#1A5F8E;transform:scaleX(0.9092);transform-origin:0 50%;">245.00</div><div class="t" style="left:55.91px;top:456.88px;font-size:14.2px;line-height:14.2px;font-style:italic;color:#111111;-webkit-text-stroke:0.25px #111111;transform:scaleX(0.9673);transform-origin:0 50%;">Sum of cash inflows</div><div class="t" style="left:827.76px;top:456.88px;font-size:14.2px;line-height:14.2px;font-style:italic;color:#111111;-webkit-text-stroke:0.25px #111111;transform:scaleX(0.9507);transform-origin:0 50%;">USD</div><div class="t" style="left:865.20px;top:457.15px;font-size:14.0px;line-height:14.0px;color:#111111;-webkit-text-stroke:0.25px #111111;">$</div><div class="t" style="left:979.87px;top:457.15px;font-size:14.0px;line-height:14.0px;color:#111111;-webkit-text-stroke:0.25px #111111;transform:scaleX(0.9259);transform-origin:0 50%;">34,340.00</div><div class="t" style="left:1050.20px;top:457.15px;font-size:14.0px;line-height:14.0px;color:#111111;-webkit-text-stroke:0.25px #111111;">$</div><div class="t" style="left:1164.87px;top:457.15px;font-size:14.0px;line-height:14.0px;color:#111111;-webkit-text-stroke:0.25px #111111;transform:scaleX(0.9259);transform-origin:0 50%;">34,475.00</div><div class="t" style="left:1235.20px;top:457.15px;font-size:14.0px;line-height:14.0px;color:#111111;-webkit-text-stroke:0.25px #111111;">$</div><div class="t" style="left:1349.87px;top:457.15px;font-size:14.0px;line-height:14.0px;color:#111111;-webkit-text-stroke:0.25px #111111;transform:scaleX(0.9259);transform-origin:0 50%;">42,790.00</div><div class="t" style="left:1420.20px;top:457.15px;font-size:14.0px;line-height:14.0px;color:#111111;-webkit-text-stroke:0.25px #111111;">$</div><div class="t" style="left:1534.87px;top:457.15px;font-size:14.0px;line-height:14.0px;color:#111111;-webkit-text-stroke:0.25px #111111;transform:scaleX(0.9259);transform-origin:0 50%;">38,895.00</div><div class="t" style="left:1605.20px;top:457.15px;font-size:14.0px;line-height:14.0px;color:#111111;-webkit-text-stroke:0.25px #111111;">$</div><div class="t" style="left:1712.19px;top:457.15px;font-size:14.0px;line-height:14.0px;color:#111111;-webkit-text-stroke:0.25px #111111;transform:scaleX(0.9298);transform-origin:0 50%;">168,320.00</div><div class="t" style="left:1790.20px;top:457.15px;font-size:14.0px;line-height:14.0px;color:#111111;-webkit-text-stroke:0.25px #111111;">$</div><div class="t" style="left:54.95px;top:475.88px;font-size:14.2px;line-height:14.2px;font-style:italic;color:#111111;-webkit-text-stroke:0.25px #111111;transform:scaleX(0.9637);transform-origin:0 50%;">Total cash on hand</div><div class="t" style="left:827.76px;top:475.88px;font-size:14.2px;line-height:14.2px;font-style:italic;color:#111111;-webkit-text-stroke:0.25px #111111;transform:scaleX(0.9507);transform-origin:0 50%;">USD</div><div class="t" style="left:865.20px;top:476.15px;font-size:14.0px;line-height:14.0px;color:#111111;-webkit-text-stroke:0.25px #111111;">$</div><div class="t" style="left:973.13px;top:476.15px;font-size:14.0px;line-height:14.0px;color:#111111;-webkit-text-stroke:0.25px #111111;transform:scaleX(0.9164);transform-origin:0 50%;">654,390.00</div><div class="t" style="left:1050.20px;top:476.15px;font-size:14.0px;line-height:14.0px;color:#111111;-webkit-text-stroke:0.25px #111111;">$</div><div class="t" style="left:1158.13px;top:476.15px;font-size:14.0px;line-height:14.0px;color:#111111;-webkit-text-stroke:0.25px #111111;transform:scaleX(0.9164);transform-origin:0 50%;">669,615.00</div><div class="t" style="left:1235.20px;top:476.15px;font-size:14.0px;line-height:14.0px;color:#111111;-webkit-text-stroke:0.25px #111111;">$</div><div class="t" style="left:1343.13px;top:476.15px;font-size:14.0px;line-height:14.0px;color:#111111;-webkit-text-stroke:0.25px #111111;transform:scaleX(0.9164);transform-origin:0 50%;">695,965.00</div><div class="t" style="left:1420.20px;top:476.15px;font-size:14.0px;line-height:14.0px;color:#111111;-webkit-text-stroke:0.25px #111111;">$</div><div class="t" style="left:1528.13px;top:476.15px;font-size:14.0px;line-height:14.0px;color:#111111;-webkit-text-stroke:0.25px #111111;transform:scaleX(0.9164);transform-origin:0 50%;">708,730.00</div><div class="t" style="left:1605.20px;top:476.15px;font-size:14.0px;line-height:14.0px;color:#111111;-webkit-text-stroke:0.25px #111111;">$</div><div class="t" style="left:1713.13px;top:476.15px;font-size:14.0px;line-height:14.0px;color:#111111;-webkit-text-stroke:0.25px #111111;transform:scaleX(0.9164);transform-origin:0 50%;">859,370.00</div><div class="t" style="left:1790.20px;top:476.15px;font-size:14.0px;line-height:14.0px;color:#111111;-webkit-text-stroke:0.25px #111111;">$</div><div class="t" style="left:55.93px;top:515.88px;font-size:14.2px;line-height:14.2px;font-weight:700;color:#111111;transform:scaleX(0.9154);transform-origin:0 50%;">Cash paid out</div><div class="t" style="left:55.31px;top:553.88px;font-size:14.2px;line-height:14.2px;color:#111111;-webkit-text-stroke:0.25px #111111;transform:scaleX(0.9945);transform-origin:0 50%;">Marketing and promotion (industry conferences, community outreach, digital campaigns, sustainability programs)</div><div class="t" style="left:828.88px;top:553.88px;font-size:14.2px;line-height:14.2px;color:#111111;-webkit-text-stroke:0.25px #111111;transform:scaleX(0.8627);transform-origin:0 50%;">USD</div><div class="t" style="left:984.62px;top:554.05px;font-size:14.0px;line-height:14.0px;color:#1A5F8E;transform:scaleX(0.9382);transform-origin:0 50%;">3,800.00</div><div class="t" style="left:1169.62px;top:554.05px;font-size:14.0px;line-height:14.0px;color:#1A5F8E;transform:scaleX(0.9382);transform-origin:0 50%;">2,500.00</div><div class="t" style="left:1354.62px;top:554.05px;font-size:14.0px;line-height:14.0px;color:#1A5F8E;transform:scaleX(0.9382);transform-origin:0 50%;">4,000.00</div><div class="t" style="left:1539.62px;top:554.05px;font-size:14.0px;line-height:14.0px;color:#1A5F8E;transform:scaleX(0.9382);transform-origin:0 50%;">3,100.00</div><div class="t" style="left:1724.62px;top:554.05px;font-size:14.0px;line-height:14.0px;color:#1A5F8E;transform:scaleX(0.9382);transform-origin:0 50%;">3,700.00</div><div class="t" style="left:55.34px;top:572.88px;font-size:14.2px;line-height:14.2px;color:#111111;-webkit-text-stroke:0.25px #111111;transform:scaleX(0.9691);transform-origin:0 50%;">Sales commissions and service fees (power purchase agreements, energy sales commissions, broker fees)</div><div class="t" style="left:828.88px;top:572.88px;font-size:14.2px;line-height:14.2px;color:#111111;-webkit-text-stroke:0.25px #111111;transform:scaleX(0.8627);transform-origin:0 50%;">USD</div><div class="t" style="left:996.18px;top:573.05px;font-size:14.0px;line-height:14.0px;color:#1A5F8E;transform:scaleX(0.9092);transform-origin:0 50%;">280.00</div><div class="t" style="left:1181.18px;top:573.05px;font-size:14.0px;line-height:14.0px;color:#1A5F8E;transform:scaleX(0.9092);transform-origin:0 50%;">400.00</div><div class="t" style="left:1366.18px;top:573.05px;font-size:14.0px;line-height:14.0px;color:#1A5F8E;transform:scaleX(0.9092);transform-origin:0 50%;">410.00</div><div class="t" style="left:1551.18px;top:573.05px;font-size:14.0px;line-height:14.0px;color:#1A5F8E;transform:scaleX(0.9092);transform-origin:0 50%;">360.00</div><div class="t" style="left:1723.66px;top:573.05px;font-size:14.0px;line-height:14.0px;color:#1A5F8E;transform:scaleX(0.9561);transform-origin:0 50%;">1,650.00</div><div class="t" style="left:56.30px;top:591.88px;font-size:14.2px;line-height:14.2px;color:#111111;-webkit-text-stroke:0.25px #111111;transform:scaleX(0.9854);transform-origin:0 50%;">Contracted labor services (engineers, environmental consultants, plant operators, contractors)</div><div class="t" style="left:828.88px;top:591.88px;font-size:14.2px;line-height:14.2px;color:#111111;-webkit-text-stroke:0.25px #111111;transform:scaleX(0.8627);transform-origin:0 50%;">USD</div><div class="t" style="left:996.18px;top:592.05px;font-size:14.0px;line-height:14.0px;color:#1A5F8E;transform:scaleX(0.9092);transform-origin:0 50%;">210.00</div><div class="t" style="left:1181.18px;top:592.05px;font-size:14.0px;line-height:14.0px;color:#1A5F8E;transform:scaleX(0.9092);transform-origin:0 50%;">270.00</div><div class="t" style="left:1365.24px;top:592.05px;font-size:14.0px;line-height:14.0px;color:#1A5F8E;transform:scaleX(0.9312);transform-origin:0 50%;">185.00</div><div class="t" style="left:1551.18px;top:592.05px;font-size:14.0px;line-height:14.0px;color:#1A5F8E;transform:scaleX(0.9092);transform-origin:0 50%;">230.00</div><div class="t" style="left:1735.24px;top:592.05px;font-size:14.0px;line-height:14.0px;color:#1A5F8E;transform:scaleX(0.9312);transform-origin:0 50%;">195.00</div><div class="t" style="left:55.33px;top:610.88px;font-size:14.2px;line-height:14.2px;color:#111111;-webkit-text-stroke:0.25px #111111;transform:scaleX(0.9774);transform-origin:0 50%;">Employee benefits programs (health contributions, PTO, retirement plans, bonuses)</div><div class="t" style="left:828.88px;top:610.88px;font-size:14.2px;line-height:14.2px;color:#111111;-webkit-text-stroke:0.25px #111111;transform:scaleX(0.8627);transform-origin:0 50%;">USD</div><div class="t" style="left:996.18px;top:611.05px;font-size:14.0px;line-height:14.0px;color:#1A5F8E;transform:scaleX(0.9092);transform-origin:0 50%;">610.00</div><div class="t" style="left:1181.18px;top:611.05px;font-size:14.0px;line-height:14.0px;color:#1A5F8E;transform:scaleX(0.9092);transform-origin:0 50%;">660.00</div><div class="t" style="left:1365.24px;top:611.05px;font-size:14.0px;line-height:14.0px;color:#1A5F8E;transform:scaleX(0.9312);transform-origin:0 50%;">590.00</div><div class="t" style="left:1551.18px;top:611.05px;font-size:14.0px;line-height:14.0px;color:#1A5F8E;transform:scaleX(0.9092);transform-origin:0 50%;">620.00</div><div class="t" style="left:1736.18px;top:611.05px;font-size:14.0px;line-height:14.0px;color:#1A5F8E;transform:scaleX(0.9092);transform-origin:0 50%;">635.00</div><div class="t" style="left:55.30px;top:629.88px;font-size:14.2px;line-height:14.2px;color:#111111;-webkit-text-stroke:0.25px #111111;">Insurance (excluding health) (property, liability, equipment, environmental insurance)</div><div class="t" style="left:828.88px;top:629.88px;font-size:14.2px;line-height:14.2px;color:#111111;-webkit-text-stroke:0.25px #111111;transform:scaleX(0.8627);transform-origin:0 50%;">USD</div><div class="t" style="left:984.62px;top:630.05px;font-size:14.0px;line-height:14.0px;color:#1A5F8E;transform:scaleX(0.9382);transform-origin:0 50%;">4,650.00</div><div class="t" style="left:1169.62px;top:630.05px;font-size:14.0px;line-height:14.0px;color:#1A5F8E;transform:scaleX(0.9382);transform-origin:0 50%;">4,050.00</div><div class="t" style="left:1354.62px;top:630.05px;font-size:14.0px;line-height:14.0px;color:#1A5F8E;transform:scaleX(0.9382);transform-origin:0 50%;">4,400.00</div><div class="t" style="left:1539.62px;top:630.05px;font-size:14.0px;line-height:14.0px;color:#1A5F8E;transform:scaleX(0.9382);transform-origin:0 50%;">4,450.00</div><div class="t" style="left:1724.62px;top:630.05px;font-size:14.0px;line-height:14.0px;color:#1A5F8E;transform:scaleX(0.9382);transform-origin:0 50%;">4,000.00</div><div class="t" style="left:55.31px;top:648.88px;font-size:14.2px;line-height:14.2px;color:#111111;-webkit-text-stroke:0.25px #111111;transform:scaleX(0.9918);transform-origin:0 50%;">Interest charges (plant construction loans, equipment financing, lines of credit)</div><div class="t" style="left:828.88px;top:648.88px;font-size:14.2px;line-height:14.2px;color:#111111;-webkit-text-stroke:0.25px #111111;transform:scaleX(0.8627);transform-origin:0 50%;">USD</div><div class="t" style="left:995.24px;top:649.05px;font-size:14.0px;line-height:14.0px;color:#1A5F8E;transform:scaleX(0.9312);transform-origin:0 50%;">165.00</div><div class="t" style="left:1181.18px;top:649.05px;font-size:14.0px;line-height:14.0px;color:#1A5F8E;transform:scaleX(0.9092);transform-origin:0 50%;">210.00</div><div class="t" style="left:1365.24px;top:649.05px;font-size:14.0px;line-height:14.0px;color:#1A5F8E;transform:scaleX(0.9312);transform-origin:0 50%;">185.00</div><div class="t" style="left:1550.24px;top:649.05px;font-size:14.0px;line-height:14.0px;color:#1A5F8E;transform:scaleX(0.9312);transform-origin:0 50%;">175.00</div><div class="t" style="left:1735.24px;top:649.05px;font-size:14.0px;line-height:14.0px;color:#1A5F8E;transform:scaleX(0.9312);transform-origin:0 50%;">170.00</div><div class="t" style="left:55.31px;top:667.88px;font-size:14.2px;line-height:14.2px;color:#111111;-webkit-text-stroke:0.25px #111111;transform:scaleX(0.9926);transform-origin:0 50%;">Raw materials and production supplies (biomass, feedstock, chemicals, catalysts)</div><div class="t" style="left:828.88px;top:667.88px;font-size:14.2px;line-height:14.2px;color:#111111;-webkit-text-stroke:0.25px #111111;transform:scaleX(0.8627);transform-origin:0 50%;">USD</div><div class="t" style="left:983.66px;top:668.05px;font-size:14.0px;line-height:14.0px;color:#1A5F8E;transform:scaleX(0.9561);transform-origin:0 50%;">1,450.00</div><div class="t" style="left:1168.66px;top:668.05px;font-size:14.0px;line-height:14.0px;color:#1A5F8E;transform:scaleX(0.9561);transform-origin:0 50%;">1,400.00</div><div class="t" style="left:1354.62px;top:668.05px;font-size:14.0px;line-height:14.0px;color:#1A5F8E;transform:scaleX(0.9382);transform-origin:0 50%;">8,550.00</div><div class="t" style="left:1538.66px;top:668.05px;font-size:14.0px;line-height:14.0px;color:#1A5F8E;transform:scaleX(0.9561);transform-origin:0 50%;">1,270.00</div><div class="t" style="left:1723.66px;top:668.05px;font-size:14.0px;line-height:14.0px;color:#1A5F8E;transform:scaleX(0.9561);transform-origin:0 50%;">1,400.00</div><div class="t" style="left:55.33px;top:686.88px;font-size:14.2px;line-height:14.2px;color:#111111;-webkit-text-stroke:0.25px #111111;transform:scaleX(0.9743);transform-origin:0 50%;">Meals and client entertainment (business meetings, community engagement events, partner visits)</div><div class="t" style="left:828.88px;top:686.88px;font-size:14.2px;line-height:14.2px;color:#111111;-webkit-text-stroke:0.25px #111111;transform:scaleX(0.8627);transform-origin:0 50%;">USD</div><div class="t" style="left:996.18px;top:687.05px;font-size:14.0px;line-height:14.0px;color:#1A5F8E;transform:scaleX(0.9092);transform-origin:0 50%;">255.00</div><div class="t" style="left:1181.18px;top:687.05px;font-size:14.0px;line-height:14.0px;color:#1A5F8E;transform:scaleX(0.9092);transform-origin:0 50%;">225.00</div><div class="t" style="left:1366.18px;top:687.05px;font-size:14.0px;line-height:14.0px;color:#1A5F8E;transform:scaleX(0.9092);transform-origin:0 50%;">250.00</div><div class="t" style="left:1551.18px;top:687.05px;font-size:14.0px;line-height:14.0px;color:#1A5F8E;transform:scaleX(0.9092);transform-origin:0 50%;">245.00</div><div class="t" style="left:1736.18px;top:687.05px;font-size:14.0px;line-height:14.0px;color:#1A5F8E;transform:scaleX(0.9092);transform-origin:0 50%;">235.00</div><div class="t" style="left:55.33px;top:705.88px;font-size:14.2px;line-height:14.2px;color:#111111;-webkit-text-stroke:0.25px #111111;transform:scaleX(0.9789);transform-origin:0 50%;">Mortgage interest payments (if plant or facilities are owned)</div><div class="t" style="left:828.88px;top:705.88px;font-size:14.2px;line-height:14.2px;color:#111111;-webkit-text-stroke:0.25px #111111;transform:scaleX(0.8627);transform-origin:0 50%;">USD</div><div class="t" style="left:996.18px;top:706.05px;font-size:14.0px;line-height:14.0px;color:#1A5F8E;transform:scaleX(0.9092);transform-origin:0 50%;">910.00</div><div class="t" style="left:1181.18px;top:706.05px;font-size:14.0px;line-height:14.0px;color:#1A5F8E;transform:scaleX(0.9092);transform-origin:0 50%;">940.00</div><div class="t" style="left:1366.18px;top:706.05px;font-size:14.0px;line-height:14.0px;color:#1A5F8E;transform:scaleX(0.9092);transform-origin:0 50%;">810.00</div><div class="t" style="left:1551.18px;top:706.05px;font-size:14.0px;line-height:14.0px;color:#1A5F8E;transform:scaleX(0.9092);transform-origin:0 50%;">830.00</div><div class="t" style="left:1736.18px;top:706.05px;font-size:14.0px;line-height:14.0px;color:#1A5F8E;transform:scaleX(0.9092);transform-origin:0 50%;">920.00</div><div class="t" style="left:56.30px;top:724.88px;font-size:14.2px;line-height:14.2px;color:#111111;-webkit-text-stroke:0.25px #111111;transform:scaleX(0.9868);transform-origin:0 50%;">General office expenses (software, communication tools, administrative supplies)</div><div class="t" style="left:828.88px;top:724.88px;font-size:14.2px;line-height:14.2px;color:#111111;-webkit-text-stroke:0.25px #111111;transform:scaleX(0.8627);transform-origin:0 50%;">USD</div><div class="t" style="left:996.18px;top:725.05px;font-size:14.0px;line-height:14.0px;color:#1A5F8E;transform:scaleX(0.9092);transform-origin:0 50%;">360.00</div><div class="t" style="left:1181.18px;top:725.05px;font-size:14.0px;line-height:14.0px;color:#1A5F8E;transform:scaleX(0.9092);transform-origin:0 50%;">380.00</div><div class="t" style="left:1366.18px;top:725.05px;font-size:14.0px;line-height:14.0px;color:#1A5F8E;transform:scaleX(0.9092);transform-origin:0 50%;">360.00</div><div class="t" style="left:1551.18px;top:725.05px;font-size:14.0px;line-height:14.0px;color:#1A5F8E;transform:scaleX(0.9092);transform-origin:0 50%;">350.00</div><div class="t" style="left:1736.18px;top:725.05px;font-size:14.0px;line-height:14.0px;color:#1A5F8E;transform:scaleX(0.9092);transform-origin:0 50%;">340.00</div><div class="t" style="left:56.30px;top:743.88px;font-size:14.2px;line-height:14.2px;color:#111111;-webkit-text-stroke:0.25px #111111;transform:scaleX(0.9896);transform-origin:0 50%;">Additional interest costs (line-of-credit interest, financing fees)</div><div class="t" style="left:828.88px;top:743.88px;font-size:14.2px;line-height:14.2px;color:#111111;-webkit-text-stroke:0.25px #111111;transform:scaleX(0.8627);transform-origin:0 50%;">USD</div><div class="t" style="left:995.24px;top:744.05px;font-size:14.0px;line-height:14.0px;color:#1A5F8E;transform:scaleX(0.9312);transform-origin:0 50%;">135.00</div><div class="t" style="left:1180.24px;top:744.05px;font-size:14.0px;line-height:14.0px;color:#1A5F8E;transform:scaleX(0.9312);transform-origin:0 50%;">140.00</div><div class="t" style="left:1365.24px;top:744.05px;font-size:14.0px;line-height:14.0px;color:#1A5F8E;transform:scaleX(0.9312);transform-origin:0 50%;">130.00</div><div class="t" style="left:1550.24px;top:744.05px;font-size:14.0px;line-height:14.0px;color:#1A5F8E;transform:scaleX(0.9312);transform-origin:0 50%;">145.00</div><div class="t" style="left:1735.24px;top:744.05px;font-size:14.0px;line-height:14.0px;color:#1A5F8E;transform:scaleX(0.9312);transform-origin:0 50%;">135.00</div><div class="t" style="left:55.32px;top:762.88px;font-size:14.2px;line-height:14.2px;color:#111111;-webkit-text-stroke:0.25px #111111;transform:scaleX(0.9846);transform-origin:0 50%;">Pension and retirement contributions (employee retirement plans)</div><div class="t" style="left:828.88px;top:762.88px;font-size:14.2px;line-height:14.2px;color:#111111;-webkit-text-stroke:0.25px #111111;transform:scaleX(0.8627);transform-origin:0 50%;">USD</div><div class="t" style="left:996.18px;top:763.05px;font-size:14.0px;line-height:14.0px;color:#1A5F8E;transform:scaleX(0.9092);transform-origin:0 50%;">470.00</div><div class="t" style="left:1180.24px;top:763.05px;font-size:14.0px;line-height:14.0px;color:#1A5F8E;transform:scaleX(0.9312);transform-origin:0 50%;">500.00</div><div class="t" style="left:1366.18px;top:763.05px;font-size:14.0px;line-height:14.0px;color:#1A5F8E;transform:scaleX(0.9092);transform-origin:0 50%;">450.00</div><div class="t" style="left:1551.18px;top:763.05px;font-size:14.0px;line-height:14.0px;color:#1A5F8E;transform:scaleX(0.9092);transform-origin:0 50%;">440.00</div><div class="t" style="left:1736.18px;top:763.05px;font-size:14.0px;line-height:14.0px;color:#1A5F8E;transform:scaleX(0.9092);transform-origin:0 50%;">480.00</div><div class="t" style="left:55.33px;top:781.88px;font-size:14.2px;line-height:14.2px;color:#111111;-webkit-text-stroke:0.25px #111111;transform:scaleX(0.9781);transform-origin:0 50%;">Inventory purchases for resale (biogas-related products sold to clients, e.g., digestate fertilizers)</div><div class="t" style="left:828.88px;top:781.88px;font-size:14.2px;line-height:14.2px;color:#111111;-webkit-text-stroke:0.25px #111111;transform:scaleX(0.8627);transform-origin:0 50%;">USD</div><div class="t" style="left:983.66px;top:782.05px;font-size:14.0px;line-height:14.0px;color:#1A5F8E;transform:scaleX(0.9561);transform-origin:0 50%;">1,030.00</div><div class="t" style="left:1168.66px;top:782.05px;font-size:14.0px;line-height:14.0px;color:#1A5F8E;transform:scaleX(0.9561);transform-origin:0 50%;">1,080.00</div><div class="t" style="left:1366.18px;top:782.05px;font-size:14.0px;line-height:14.0px;color:#1A5F8E;transform:scaleX(0.9092);transform-origin:0 50%;">920.00</div><div class="t" style="left:1551.18px;top:782.05px;font-size:14.0px;line-height:14.0px;color:#1A5F8E;transform:scaleX(0.9092);transform-origin:0 50%;">930.00</div><div class="t" style="left:1736.18px;top:782.05px;font-size:14.0px;line-height:14.0px;color:#1A5F8E;transform:scaleX(0.9092);transform-origin:0 50%;">960.00</div><div class="t" style="left:55.33px;top:800.88px;font-size:14.2px;line-height:14.2px;color:#111111;-webkit-text-stroke:0.25px #111111;transform:scaleX(0.9744);transform-origin:0 50%;">Rent or lease payments (land lease, office space, storage facilities)</div><div class="t" style="left:828.88px;top:800.88px;font-size:14.2px;line-height:14.2px;color:#111111;-webkit-text-stroke:0.25px #111111;transform:scaleX(0.8627);transform-origin:0 50%;">USD</div><div class="t" style="left:984.62px;top:801.05px;font-size:14.0px;line-height:14.0px;color:#1A5F8E;transform:scaleX(0.9382);transform-origin:0 50%;">2,420.00</div><div class="t" style="left:1169.62px;top:801.05px;font-size:14.0px;line-height:14.0px;color:#1A5F8E;transform:scaleX(0.9382);transform-origin:0 50%;">2,170.00</div><div class="t" style="left:1354.62px;top:801.05px;font-size:14.0px;line-height:14.0px;color:#1A5F8E;transform:scaleX(0.9382);transform-origin:0 50%;">2,320.00</div><div class="t" style="left:1539.62px;top:801.05px;font-size:14.0px;line-height:14.0px;color:#1A5F8E;transform:scaleX(0.9382);transform-origin:0 50%;">2,170.00</div><div class="t" style="left:1724.62px;top:801.05px;font-size:14.0px;line-height:14.0px;color:#1A5F8E;transform:scaleX(0.9382);transform-origin:0 50%;">2,420.00</div><div class="t" style="left:56.31px;top:819.88px;font-size:14.2px;line-height:14.2px;color:#111111;-webkit-text-stroke:0.25px #111111;transform:scaleX(0.9796);transform-origin:0 50%;">Vehicle and equipment leases (trucks, digester equipment, plant machinery)</div><div class="t" style="left:828.88px;top:819.88px;font-size:14.2px;line-height:14.2px;color:#111111;-webkit-text-stroke:0.25px #111111;transform:scaleX(0.8627);transform-origin:0 50%;">USD</div><div class="t" style="left:995.24px;top:820.05px;font-size:14.0px;line-height:14.0px;color:#1A5F8E;transform:scaleX(0.9312);transform-origin:0 50%;">590.00</div><div class="t" style="left:1180.24px;top:820.05px;font-size:14.0px;line-height:14.0px;color:#1A5F8E;transform:scaleX(0.9312);transform-origin:0 50%;">540.00</div><div class="t" style="left:1365.24px;top:820.05px;font-size:14.0px;line-height:14.0px;color:#1A5F8E;transform:scaleX(0.9312);transform-origin:0 50%;">580.00</div><div class="t" style="left:1550.24px;top:820.05px;font-size:14.0px;line-height:14.0px;color:#1A5F8E;transform:scaleX(0.9312);transform-origin:0 50%;">550.00</div><div class="t" style="left:1735.24px;top:820.05px;font-size:14.0px;line-height:14.0px;color:#1A5F8E;transform:scaleX(0.9312);transform-origin:0 50%;">590.00</div><div class="t" style="left:55.32px;top:838.88px;font-size:14.2px;line-height:14.2px;color:#111111;-webkit-text-stroke:0.25px #111111;transform:scaleX(0.9854);transform-origin:0 50%;">Maintenance and repair costs (digesters, turbines, generators, infrastructure)</div><div class="t" style="left:828.88px;top:838.88px;font-size:14.2px;line-height:14.2px;color:#111111;-webkit-text-stroke:0.25px #111111;transform:scaleX(0.8627);transform-origin:0 50%;">USD</div><div class="t" style="left:996.18px;top:839.05px;font-size:14.0px;line-height:14.0px;color:#1A5F8E;transform:scaleX(0.9092);transform-origin:0 50%;">310.00</div><div class="t" style="left:1181.18px;top:839.05px;font-size:14.0px;line-height:14.0px;color:#1A5F8E;transform:scaleX(0.9092);transform-origin:0 50%;">330.00</div><div class="t" style="left:1366.18px;top:839.05px;font-size:14.0px;line-height:14.0px;color:#1A5F8E;transform:scaleX(0.9092);transform-origin:0 50%;">280.00</div><div class="t" style="left:1551.18px;top:839.05px;font-size:14.0px;line-height:14.0px;color:#1A5F8E;transform:scaleX(0.9092);transform-origin:0 50%;">285.00</div><div class="t" style="left:1736.18px;top:839.05px;font-size:14.0px;line-height:14.0px;color:#1A5F8E;transform:scaleX(0.9092);transform-origin:0 50%;">310.00</div><div class="t" style="left:56.30px;top:857.88px;font-size:14.2px;line-height:14.2px;color:#111111;-webkit-text-stroke:0.25px #111111;transform:scaleX(0.9938);transform-origin:0 50%;">Office and operational supplies (stationery, uniforms, safety gear, monitoring tools)</div><div class="t" style="left:828.88px;top:857.88px;font-size:14.2px;line-height:14.2px;color:#111111;-webkit-text-stroke:0.25px #111111;transform:scaleX(0.8627);transform-origin:0 50%;">USD</div><div class="t" style="left:996.18px;top:858.05px;font-size:14.0px;line-height:14.0px;color:#1A5F8E;transform:scaleX(0.9092);transform-origin:0 50%;">350.00</div><div class="t" style="left:1181.18px;top:858.05px;font-size:14.0px;line-height:14.0px;color:#1A5F8E;transform:scaleX(0.9092);transform-origin:0 50%;">330.00</div><div class="t" style="left:1366.18px;top:858.05px;font-size:14.0px;line-height:14.0px;color:#1A5F8E;transform:scaleX(0.9092);transform-origin:0 50%;">340.00</div><div class="t" style="left:1551.18px;top:858.05px;font-size:14.0px;line-height:14.0px;color:#1A5F8E;transform:scaleX(0.9092);transform-origin:0 50%;">350.00</div><div class="t" style="left:1736.18px;top:858.05px;font-size:14.0px;line-height:14.0px;color:#1A5F8E;transform:scaleX(0.9092);transform-origin:0 50%;">370.00</div><div class="t" style="left:56.31px;top:876.88px;font-size:14.2px;line-height:14.2px;color:#111111;-webkit-text-stroke:0.25px #111111;transform:scaleX(0.9687);transform-origin:0 50%;">Taxes, licenses, and regulatory fees (environmental permits, energy compliance fees, local taxes)</div><div class="t" style="left:828.88px;top:876.88px;font-size:14.2px;line-height:14.2px;color:#111111;-webkit-text-stroke:0.25px #111111;transform:scaleX(0.8627);transform-origin:0 50%;">USD</div><div class="t" style="left:996.18px;top:877.05px;font-size:14.0px;line-height:14.0px;color:#1A5F8E;transform:scaleX(0.9092);transform-origin:0 50%;">690.00</div><div class="t" style="left:1181.18px;top:877.05px;font-size:14.0px;line-height:14.0px;color:#1A5F8E;transform:scaleX(0.9092);transform-origin:0 50%;">630.00</div><div class="t" style="left:1366.18px;top:877.05px;font-size:14.0px;line-height:14.0px;color:#1A5F8E;transform:scaleX(0.9092);transform-origin:0 50%;">670.00</div><div class="t" style="left:1551.18px;top:877.05px;font-size:14.0px;line-height:14.0px;color:#1A5F8E;transform:scaleX(0.9092);transform-origin:0 50%;">610.00</div><div class="t" style="left:1736.18px;top:877.05px;font-size:14.0px;line-height:14.0px;color:#1A5F8E;transform:scaleX(0.9092);transform-origin:0 50%;">690.00</div><div class="t" style="left:55.34px;top:895.88px;font-size:14.2px;line-height:14.2px;color:#111111;-webkit-text-stroke:0.25px #111111;transform:scaleX(0.9726);transform-origin:0 50%;">Business travel expenses (site visits, training, conferences, supplier meetings)</div><div class="t" style="left:828.88px;top:895.88px;font-size:14.2px;line-height:14.2px;color:#111111;-webkit-text-stroke:0.25px #111111;transform:scaleX(0.8627);transform-origin:0 50%;">USD</div><div class="t" style="left:996.18px;top:896.05px;font-size:14.0px;line-height:14.0px;color:#1A5F8E;transform:scaleX(0.9092);transform-origin:0 50%;">460.00</div><div class="t" style="left:1181.18px;top:896.05px;font-size:14.0px;line-height:14.0px;color:#1A5F8E;transform:scaleX(0.9092);transform-origin:0 50%;">430.00</div><div class="t" style="left:1366.18px;top:896.05px;font-size:14.0px;line-height:14.0px;color:#1A5F8E;transform:scaleX(0.9092);transform-origin:0 50%;">430.00</div><div class="t" style="left:1551.18px;top:896.05px;font-size:14.0px;line-height:14.0px;color:#1A5F8E;transform:scaleX(0.9092);transform-origin:0 50%;">415.00</div><div class="t" style="left:1736.18px;top:896.05px;font-size:14.0px;line-height:14.0px;color:#1A5F8E;transform:scaleX(0.9092);transform-origin:0 50%;">460.00</div></div></div><div class="r" style="left:24px;top:24px;width:27px;height:18px;border:2px solid #1D6B3B;"></div><div class="r" style="left:50px;top:41px;width:6px;height:6px;background:#FFFFFF;"></div><div class="r" style="left:51px;top:42px;width:5px;height:5px;background:#1D6B3B;"></div></body></html>
